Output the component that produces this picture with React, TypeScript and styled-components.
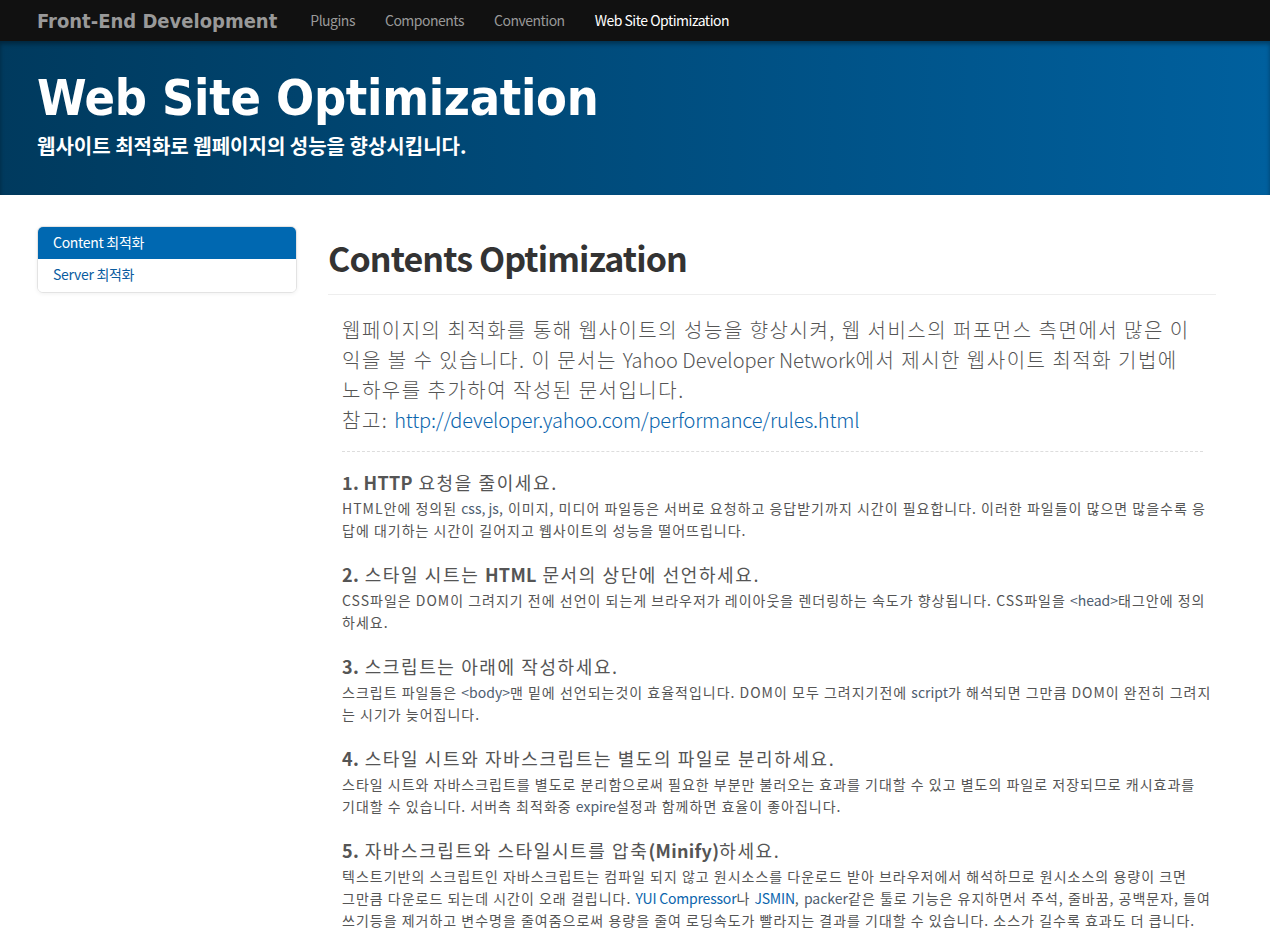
import React from "react";
import styled, { createGlobalStyle } from "styled-components";

const Global = createGlobalStyle`
  html, body { margin: 0; padding: 0; background: #fff; }
  body {
    font-family: "Noto Sans CJK KR", "Noto Sans", sans-serif;
    color: #555;
    font-size: 14px;
  }
  * { box-sizing: border-box; }
`;

const Navbar = styled.nav`
  height: 41px;
  background: #111;
  display: flex;
  align-items: center;
  padding: 0 37px;
`;

const Brand = styled.a`
  font-family: "DejaVu Sans Condensed", "DejaVu Sans", sans-serif;
  font-weight: bold;
  font-size: 20px;
  color: #999;
  text-decoration: none;
  margin-right: 18px;
`;

const NavList = styled.ul`
  display: flex;
  list-style: none;
  margin: 0;
  padding: 0;
`;

const NavItem = styled.li<{ $active?: boolean }>`
  padding: 0 15px;
  font-size: 14px;
  line-height: 41px;
  color: ${(p) => (p.$active ? "#fff" : "#999")};
  letter-spacing: -0.5px;
`;

const Hero = styled.header`
  height: 154px;
  background: linear-gradient(to right, #003a5e 0%, #00609e 100%);
  box-shadow: inset 0 3px 4px rgba(0, 0, 0, 0.35);
  padding: 27px 37px 0;
  color: #fff;
`;

const HeroTitle = styled.h1`
  margin: 0;
  font-family: "DejaVu Sans Condensed", "DejaVu Sans", sans-serif;
  font-weight: bold;
  font-size: 50px;
  line-height: 60px;
  letter-spacing: -0.3px;
`;

const HeroSub = styled.p`
  margin: 4px 0 0;
  font-size: 20px;
  font-weight: bold;
  line-height: 28px;
  letter-spacing: 0;
`;

const Body = styled.div`
  display: flex;
  padding: 31px 54px 0 37px;
  gap: 31px;
`;

const Sidebar = styled.ul`
  width: 260px;
  flex: none;
  align-self: flex-start;
  list-style: none;
  margin: 0;
  padding: 0;
  border: 1px solid #e3e3e3;
  border-radius: 6px;
  box-shadow: 0 1px 4px rgba(0, 0, 0, 0.06);
  overflow: hidden;
`;

const SideItem = styled.li<{ $active?: boolean }>`
  height: ${(p) => (p.$active ? "32px" : "33px")};
  line-height: 31px;
  padding-left: 15px;
  font-size: 14px;
  background: ${(p) => (p.$active ? "#0068b1" : "#fff")};
  color: ${(p) => (p.$active ? "#fff" : "#0a5c9f")};
  letter-spacing: -0.3px;
`;

const Main = styled.main`
  flex: 1;
  min-width: 0;
`;

const PageTitle = styled.h2`
  margin: 0;
  padding: 10px 0 14px;
  font-size: 34px;
  font-weight: bold;
  line-height: 44px;
  color: #333;
  letter-spacing: -0.9px;
  border-bottom: 1px solid #eee;
`;

const Lead = styled.p`
  margin: 20px 13px 0 14px;
  padding-bottom: 16px;
  font-size: 20px;
  line-height: 30px;
  font-weight: 300;
  color: #555;
  white-space: nowrap;
  border-bottom: 1px dashed #ddd;
  letter-spacing: 1.5px;
`;

const Term = styled.span`
  letter-spacing: 0;
`;

const Link = styled.a`
  color: #0a65ad;
  text-decoration: none;
  letter-spacing: -0.2px;
`;

const Rules = styled.ol`
  list-style: none;
  margin: 18px 0 0 14px;
  padding: 0;
`;

const Rule = styled.li`
  margin-bottom: 21px;
`;

const RuleTitle = styled.h4`
  margin: 0 0 3px;
  font-size: 18px;
  line-height: 24px;
  font-weight: 400;
  color: #555;
  letter-spacing: 1.6px;
  white-space: nowrap;
  b { font-weight: bold; letter-spacing: 0.3px; }
`;

const RuleText = styled.p`
  margin: 0;
  font-size: 14px;
  line-height: 22px;
  font-weight: 400;
  color: #555;
  white-space: nowrap;
  letter-spacing: 1px;
`;

const Code = styled.span`
  color: #4d5d70;
  letter-spacing: 0;
`;

export default function App() {
  return (
    <>
      <Global />
      <Navbar>
        <Brand>Front-End Development</Brand>
        <NavList>
          <NavItem>Plugins</NavItem>
          <NavItem>Components</NavItem>
          <NavItem>Convention</NavItem>
          <NavItem $active>Web Site Optimization</NavItem>
        </NavList>
      </Navbar>
      <Hero>
        <HeroTitle>Web Site Optimization</HeroTitle>
        <HeroSub>웹사이트 최적화로 웹페이지의 성능을 향상시킵니다.</HeroSub>
      </Hero>
      <Body>
        <Sidebar>
          <SideItem $active>Content 최적화</SideItem>
          <SideItem>Server 최적화</SideItem>
        </Sidebar>
        <Main>
          <PageTitle>Contents Optimization</PageTitle>
          <Lead>
            웹페이지의 최적화를 통해 웹사이트의 성능을 향상시켜, 웹 서비스의 퍼포먼스 측면에서 많은 이<br />
            익을 볼 수 있습니다. 이 문서는 <Term>Yahoo Developer Network</Term>에서 제시한 웹사이트 최적화 기법에<br />
            노하우를 추가하여 작성된 문서입니다.<br />
            참고: <Link>http://developer.yahoo.com/performance/rules.html</Link>
          </Lead>
          <Rules>
            <Rule>
              <RuleTitle><b>1. HTTP</b> 요청을 줄이세요.</RuleTitle>
              <RuleText>
                HTML안에 정의된 <Code>css, js</Code>, 이미지, 미디어 파일등은 서버로 요청하고 응답받기까지 시간이 필요합니다. 이러한 파일들이 많으면 많을수록 응<br />
                답에 대기하는 시간이 길어지고 웹사이트의 성능을 떨어뜨립니다.
              </RuleText>
            </Rule>
            <Rule>
              <RuleTitle><b>2.</b> 스타일 시트는 <b>HTML</b> 문서의 상단에 선언하세요.</RuleTitle>
              <RuleText>
                CSS파일은 DOM이 그려지기 전에 선언이 되는게 브라우저가 레이아웃을 렌더링하는 속도가 향상됩니다. CSS파일을 <Code>&lt;head&gt;</Code>태그안에 정의<br />
                하세요.
              </RuleText>
            </Rule>
            <Rule>
              <RuleTitle><b>3.</b> 스크립트는 아래에 작성하세요.</RuleTitle>
              <RuleText>
                스크립트 파일들은 <Code>&lt;body&gt;</Code>맨 밑에 선언되는것이 효율적입니다. DOM이 모두 그려지기전에 <Code>script</Code>가 해석되면 그만큼 DOM이 완전히 그려지<br />
                는 시기가 늦어집니다.
              </RuleText>
            </Rule>
            <Rule>
              <RuleTitle><b>4.</b> 스타일 시트와 자바스크립트는 별도의 파일로 분리하세요.</RuleTitle>
              <RuleText>
                스타일 시트와 자바스크립트를 별도로 분리함으로써 필요한 부분만 불러오는 효과를 기대할 수 있고 별도의 파일로 저장되므로 캐시효과를<br />
                기대할 수 있습니다. 서버측 최적화중 <Code>expire</Code>설정과 함께하면 효율이 좋아집니다.
              </RuleText>
            </Rule>
            <Rule>
              <RuleTitle><b>5.</b> 자바스크립트와 스타일시트를 압축<b>(Minify)</b>하세요.</RuleTitle>
              <RuleText>
                텍스트기반의 스크립트인 자바스크립트는 컴파일 되지 않고 원시소스를 다운로드 받아 브라우저에서 해석하므로 원시소스의 용량이 크면<br />
                그만큼 다운로드 되는데 시간이 오래 걸립니다. <Link>YUI Compressor</Link>나 <Link>JSMIN</Link>, <Code>packer</Code>같은 툴로 기능은 유지하면서 주석, 줄바꿈, 공백문자, 들여<br />
                쓰기등을 제거하고 변수명을 줄여줌으로써 용량을 줄여 로딩속도가 빨라지는 결과를 기대할 수 있습니다. 소스가 길수록 효과도 더 큽니다.
              </RuleText>
            </Rule>
          </Rules>
        </Main>
      </Body>
    </>
  );
}
